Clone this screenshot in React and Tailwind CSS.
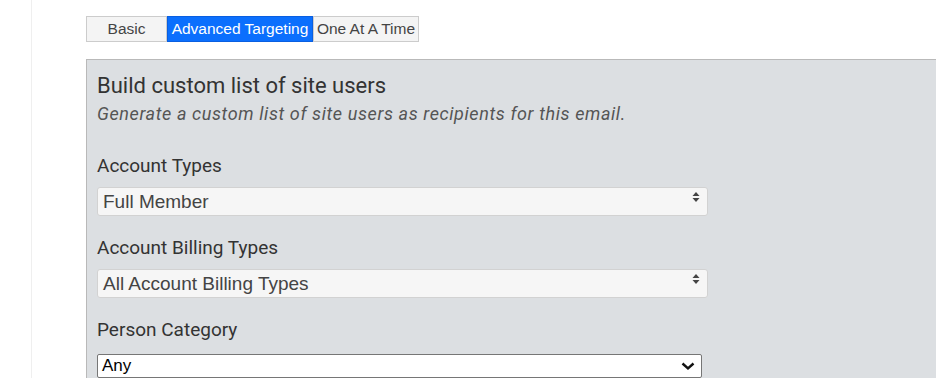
import React from 'react';

const sans = { fontFamily: '"Liberation Sans", Arial, sans-serif' };
const roboto = { fontFamily: 'Roboto, "Liberation Sans", sans-serif' };

// Boton de pestana
const Tab = ({ label, active, width }) => (
  <div
    className={`flex h-[26px] items-center justify-center border text-[15.5px] ${width} ${
      active
        ? 'border-[#0a5fe0] bg-[#0b6ffd] text-white'
        : 'border-[#cccccc] bg-[#f4f4f4] text-[#444]'
    }`}
    style={sans}
  >
    {label}
  </div>
);

const UpDown = () => (
  <svg width="8" height="12" viewBox="0 0 8 12" className="mt-[-2px]">
    <path d="M4 1 L7.5 5 H0.5 Z" fill="#444" />
    <path d="M4 11 L7.5 7 H0.5 Z" fill="#444" />
  </svg>
);

const Chevron = () => (
  <svg width="14" height="9" viewBox="0 0 14 9">
    <path d="M1.5 1.5 L7 6.5 L12.5 1.5" fill="none" stroke="#111" strokeWidth="2.4" />
  </svg>
);

const SoftSelect = ({ value }) => (
  <div
    className="flex h-[29px] w-[611px] items-start justify-between rounded-[3px] border border-[#d2d2d2] bg-[#f6f6f6] pl-[5px] pr-[7px] text-[19px] leading-[27px] text-[#444]"
    style={sans}
  >
    <span>{value}</span>
    <div className="pt-[5px]">
      <UpDown />
    </div>
  </div>
);

const Field = ({ label, children, mb = 'mb-[20px]', gap = 'mb-[9px]' }) => (
  <div className={mb}>
    <div className={`text-[19px] leading-[24px] text-[#333] ${gap}`} style={roboto}>
      {label}
    </div>
    {children}
  </div>
);

export default function App() {
  return (
    <div className="flex h-[378px] w-[936px] overflow-hidden bg-white">
      <div className="w-[31px] shrink-0" />
      <div className="w-px shrink-0 bg-[#efefef]" />
      <div className="flex-1 pl-[54px] pt-[16px]">
        <div className="flex">
          <Tab label="Basic" width="w-[81px]" />
          <Tab label="Advanced Targeting" width="w-[146px]" active />
          <Tab label="One At A Time" width="w-[106px]" />
        </div>

        <div className="mt-[17px] border-l border-t border-[#b9b9b9] bg-[#dcdfe2] pl-[10px] pt-[12px]">
          <h2 className="text-[22px] leading-[28px] text-[#333]" style={roboto}>
            Build custom list of site users
          </h2>
          <p
            className="mb-[28px] mt-[2px] text-[18px] italic leading-[24px] tracking-[0.6px] text-[#555]"
            style={roboto}
          >
            Generate a custom list of site users as recipients for this email.
          </p>

          <Field label="Account Types">
            <SoftSelect value="Full Member" />
          </Field>

          <Field label="Account Billing Types">
            <SoftSelect value="All Account Billing Types" />
          </Field>

          <Field label="Person Category" gap="mb-[12px]" mb="mb-0">
            <div
              className="flex h-[24px] w-[605px] items-center justify-between rounded-[2px] border border-[#767676] bg-white pl-[4px] pr-[6px] text-[17px] text-black"
              style={sans}
            >
              <span>Any</span>
              <Chevron />
            </div>
          </Field>
        </div>
      </div>
    </div>
  );
}
